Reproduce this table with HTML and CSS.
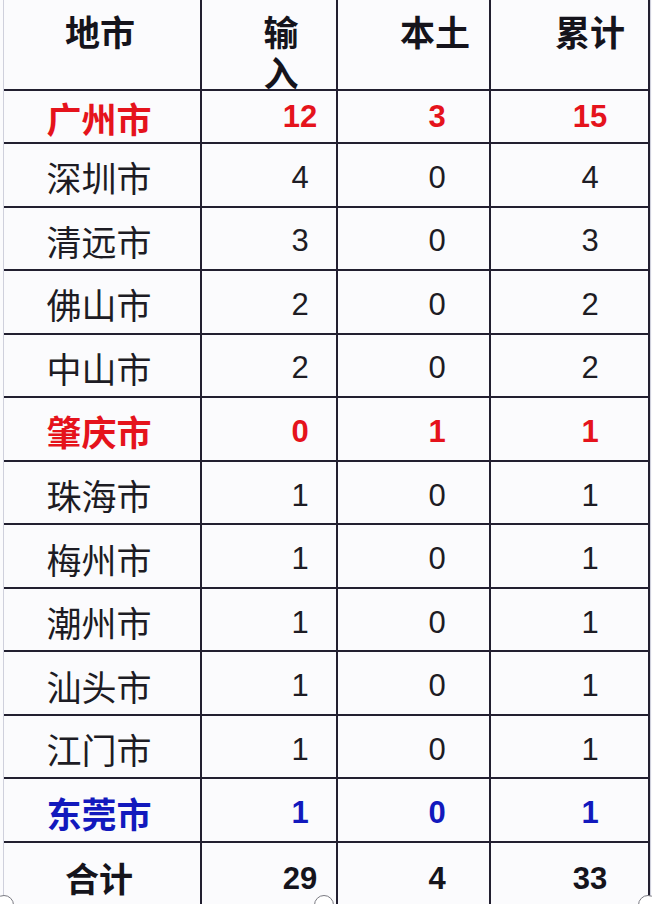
FILE: index.html
```html
<!DOCTYPE html>
<html lang="zh-CN">
<head>
<meta charset="utf-8">
<title>地市统计</title>
<link rel="stylesheet" href="styles.css">
</head>
<body>
<div class="page">
  <div class="sheet">
    <div class="cell head name">地市</div>
    <div class="cell head c2"><span class="wrap">输入</span></div>
    <div class="cell head c3">本土</div>
    <div class="cell head c4">累计</div>

    <div class="cell name red short">广州市</div>
    <div class="cell num c2 red short">12</div>
    <div class="cell num c3 red short">3</div>
    <div class="cell num c4 red short">15</div>

    <div class="cell name">深圳市</div>
    <div class="cell num c2">4</div>
    <div class="cell num c3">0</div>
    <div class="cell num c4">4</div>

    <div class="cell name">清远市</div>
    <div class="cell num c2">3</div>
    <div class="cell num c3">0</div>
    <div class="cell num c4">3</div>

    <div class="cell name">佛山市</div>
    <div class="cell num c2">2</div>
    <div class="cell num c3">0</div>
    <div class="cell num c4">2</div>

    <div class="cell name">中山市</div>
    <div class="cell num c2">2</div>
    <div class="cell num c3">0</div>
    <div class="cell num c4">2</div>

    <div class="cell name red">肇庆市</div>
    <div class="cell num c2 red">0</div>
    <div class="cell num c3 red">1</div>
    <div class="cell num c4 red">1</div>

    <div class="cell name">珠海市</div>
    <div class="cell num c2">1</div>
    <div class="cell num c3">0</div>
    <div class="cell num c4">1</div>

    <div class="cell name">梅州市</div>
    <div class="cell num c2">1</div>
    <div class="cell num c3">0</div>
    <div class="cell num c4">1</div>

    <div class="cell name">潮州市</div>
    <div class="cell num c2">1</div>
    <div class="cell num c3">0</div>
    <div class="cell num c4">1</div>

    <div class="cell name">汕头市</div>
    <div class="cell num c2">1</div>
    <div class="cell num c3">0</div>
    <div class="cell num c4">1</div>

    <div class="cell name">江门市</div>
    <div class="cell num c2">1</div>
    <div class="cell num c3">0</div>
    <div class="cell num c4">1</div>

    <div class="cell name blue">东莞市</div>
    <div class="cell num c2 blue">1</div>
    <div class="cell num c3 blue">0</div>
    <div class="cell num c4 blue">1</div>

    <div class="cell name total">合计</div>
    <div class="cell num c2 total">29</div>
    <div class="cell num c3 total">4</div>
    <div class="cell num c4 total">33</div>
  </div>
  <span class="handle h-left"></span>
  <span class="handle h-mid"></span>
  <span class="handle h-right"></span>
</div>
</body>
</html>
```

FILE: styles.css
```css
html, body {
  margin: 0;
  padding: 0;
  background: #fbfbfd;
}

.page {
  position: relative;
  width: 652px;
  height: 904px;
  overflow: hidden;
  background: #fbfbfd;
}

.sheet {
  margin-left: 3px;
  width: 646px;
  display: grid;
  grid-template-columns: 196px 134px 151px 157px;
  grid-template-rows: 89px 51px repeat(11, 61.55px) 70px;
  column-gap: 2px;
  row-gap: 2px;
  background: #221f30;
  border-left: 1px solid #cfd0dc;
  border-right: 1px solid #cfd0dc;
}

.cell {
  background: #fbfbfd;
  display: flex;
  align-items: center;
  justify-content: center;
  text-align: center;
  font-family: "Liberation Sans", "Noto Sans CJK SC", sans-serif;
  font-size: 34px;
  color: #1d1c24;
  padding-top: 4px;
  box-sizing: border-box;
}

.cell.short {
  padding-top: 1px;
}

.name {
  font-family: "Noto Sans CJK SC", sans-serif;
  font-size: 35px;
  padding-right: 6px;
}

.head {
  align-items: flex-start;
  font-family: "Noto Sans CJK SC", sans-serif;
  font-weight: 700;
  font-size: 35px;
  line-height: 41px;
  padding-top: 10px;
  color: #15141c;
}

.head.name {
  padding-right: 4px;
}

.c2 { padding-left: 62px; }
.c3 { padding-left: 47px; }
.c4 { padding-left: 41px; }

.head.c2 {
  padding-left: 48px;
  padding-right: 24px;
}
.head.c3 { padding-left: 43px; }

.wrap {
  display: block;
  width: 40px;
  word-break: break-all;
}

.num {
  font-size: 31px;
  padding-top: 6px;
}

.red {
  color: #e5131c;
  font-weight: 700;
}

.blue {
  color: #1219bd;
  font-weight: 700;
}

.total {
  font-weight: 700;
  color: #15141c;
  padding-top: 0;
  padding-bottom: 2px;
}

.num.total {
  padding-top: 4px;
}

.name.total {
  font-size: 34px;
}

.handle {
  position: absolute;
  width: 18px;
  height: 18px;
  border-radius: 50%;
  border: 1.5px solid #7a7a82;
  background: #ffffff;
  top: 895px;
}

.h-left { left: -6px; }
.h-mid { left: 314px; }
.h-right { left: 638px; }
```
